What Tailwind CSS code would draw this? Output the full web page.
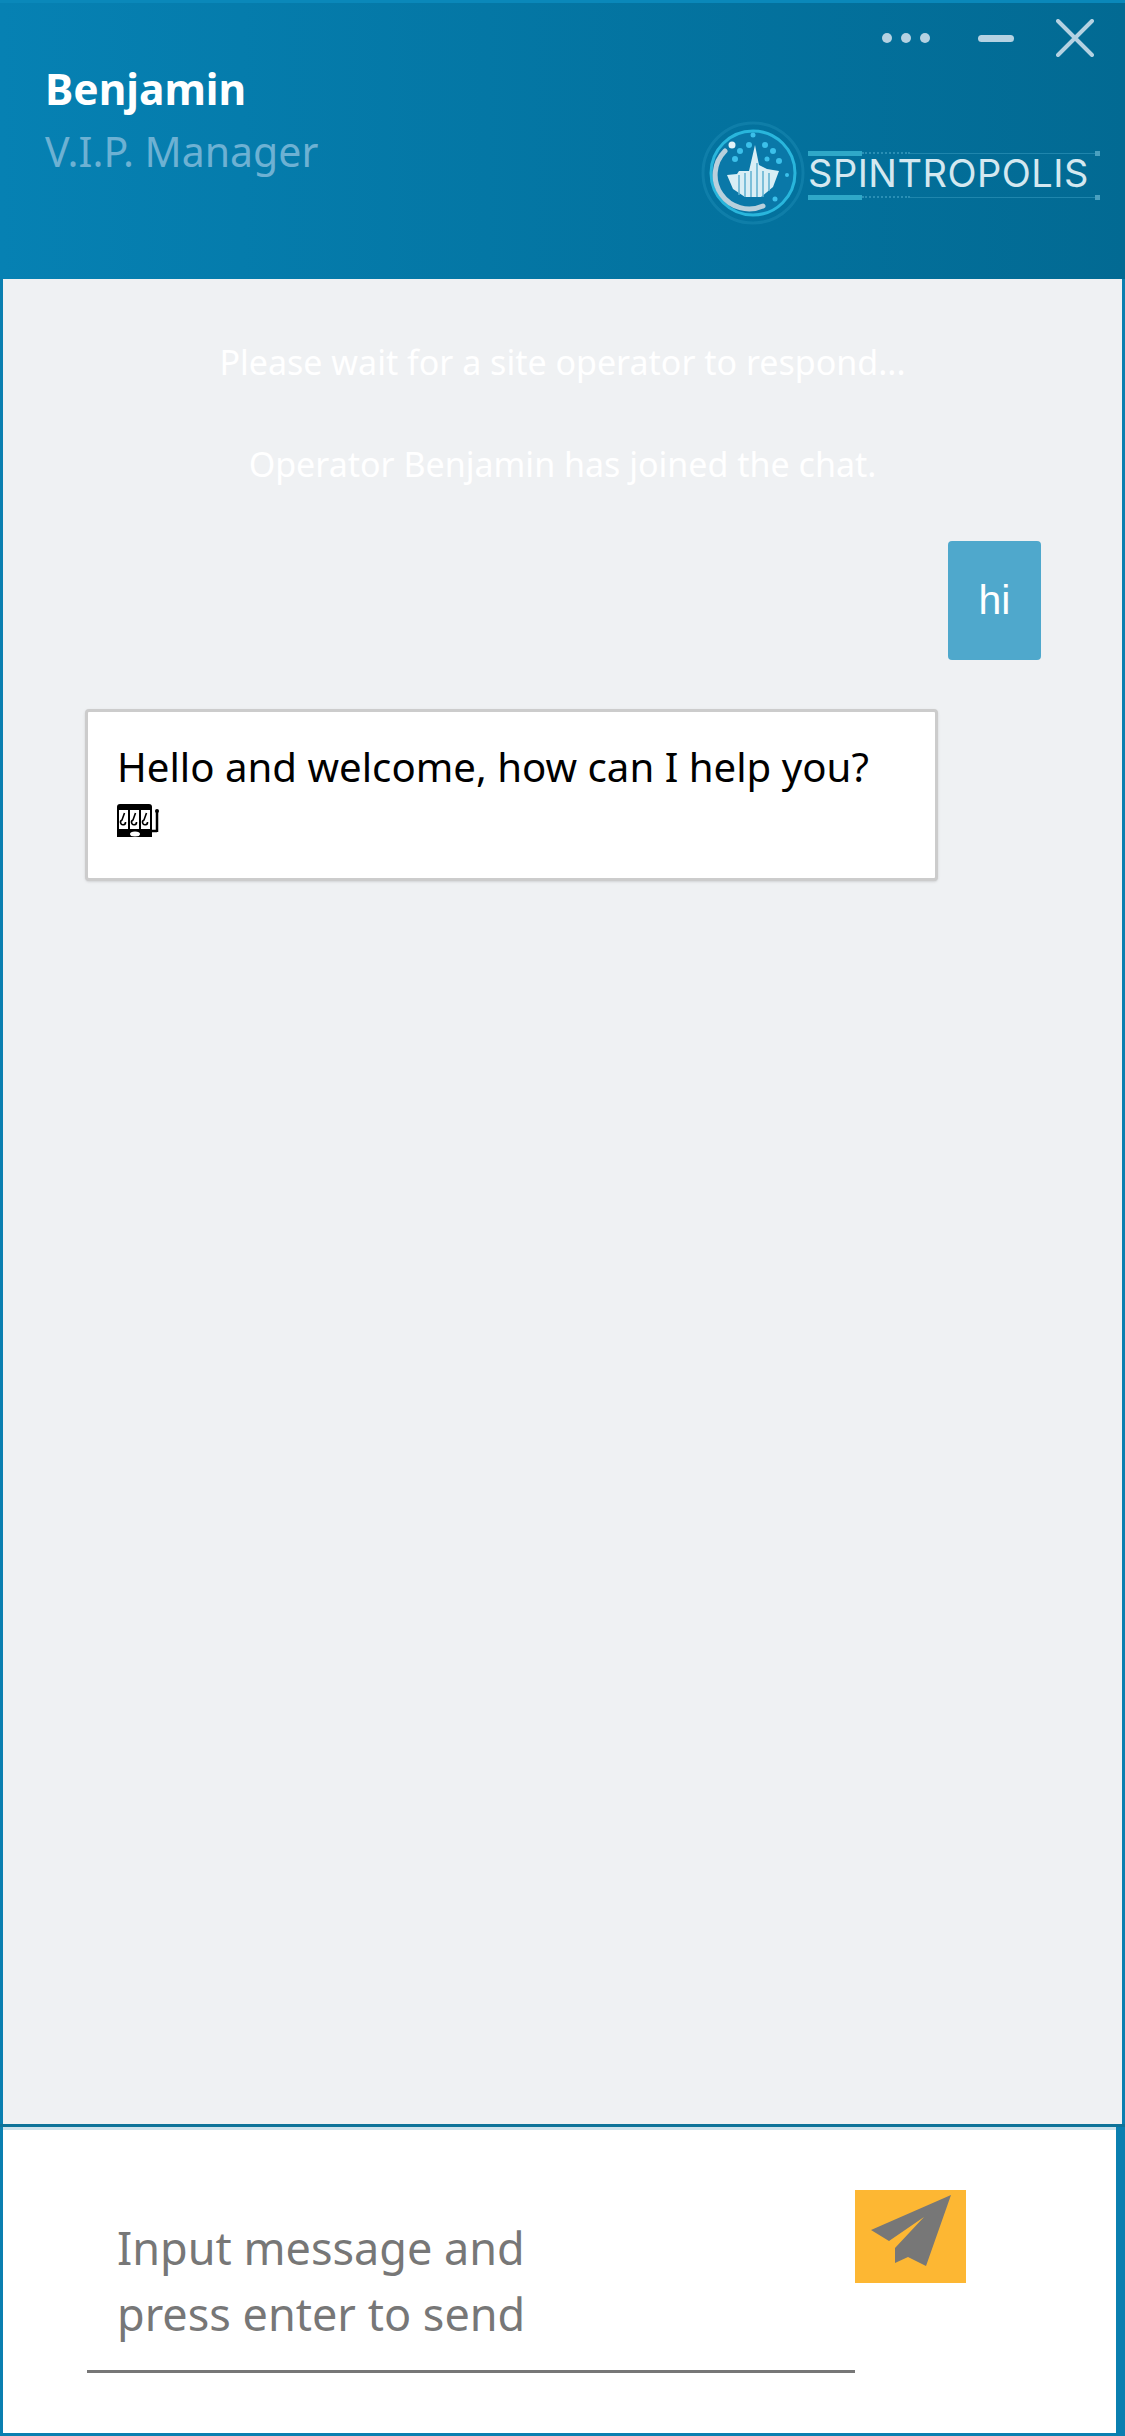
<!DOCTYPE html>
<html lang="en">
<head>
  <meta charset="UTF-8" />
  <title>Chat</title>
  <script src="https://cdn.jsdelivr.net/npm/@tailwindcss/browser@4"></script>
</head>
<body class="bg-white">
  <div class="w-[1125px] h-[2436px] flex flex-col font-['Noto_Sans','DejaVu_Sans',sans-serif] border-x-[3px] border-[#0a7fb0]">

    <!-- Header -->
    <header class="h-[279px] -mx-[3px] shrink-0 flex justify-between bg-gradient-to-r from-[#0681b3] to-[#026a93] border-t-[3px] border-[#0a88ba]">
      <div class="pl-[45px] pt-[60px]">
        <div class="text-[42.5px] leading-[52px] font-bold text-white">Benjamin</div>
        <div class="text-[41px] leading-[60px] mt-[6px] text-[#6db1d3]">V.I.P. Manager</div>
      </div>
      <div class="w-[440px] flex flex-col items-end pr-[31px]">
        <div class="flex items-center h-[66px] pt-[4px]">
          <div class="flex gap-[9px]">
            <span class="w-[10px] h-[10px] rounded-full bg-[#b5d2e2]"></span>
            <span class="w-[10px] h-[10px] rounded-full bg-[#b5d2e2]"></span>
            <span class="w-[10px] h-[10px] rounded-full bg-[#b5d2e2]"></span>
          </div>
          <span class="w-[36px] h-[7px] rounded-full bg-[#b5d2e2] ml-[48px]"></span>
          <svg class="ml-[42px]" width="38" height="38" viewBox="0 0 38 38"><path d="M2 2 L36 36 M36 2 L2 36" stroke="#b5d2e2" stroke-width="4" stroke-linecap="round"/></svg>
        </div>
        <div class="flex items-center mt-[52px] mr-[-6px]">
          <svg width="104" height="104" viewBox="0 0 104 104">
            <circle cx="52" cy="52" r="50" fill="none" stroke="#2a9cc4" stroke-width="3" opacity=".3"/>
            <circle cx="52" cy="52" r="42" fill="#0a78a8" stroke="#29b6dc" stroke-width="3"/>
            <path d="M24 30 A34 34 0 0 0 62 85" fill="none" stroke="#b9d0dc" stroke-width="5" stroke-linecap="round"/>
            <path d="M26 54 L36 53 L38 50 L48 50 L54 24 L58 44 L66 48 L78 50 L72 66 L60 76 L44 76 L32 68 Z" fill="#d9eef5"/>
            <path d="M38 54V74M44 52V76M50 50V76M56 42V76M62 50V76M68 52V70" stroke="#5fb0cf" stroke-width="1.5"/>
            <g fill="#3cc0ea">
              <circle cx="31" cy="24" r="3.5" fill="#e2f2f8"/>
              <circle cx="39" cy="30" r="3"/><circle cx="48" cy="24" r="3"/><circle cx="52" cy="14" r="2.5"/><circle cx="34" cy="38" r="3"/>
              <circle cx="64" cy="24" r="3"/><circle cx="72" cy="30" r="3"/><circle cx="78" cy="40" r="3"/><circle cx="66" cy="38" r="2.5"/>
              <circle cx="74" cy="78" r="2.5"/><circle cx="86" cy="54" r="2"/>
            </g>
          </svg>
          <div class="ml-[3px] mt-[4px] w-[292px] flex flex-col">
            <div class="flex items-center h-[5px]"><span class="w-[54px] h-[5px] bg-[#2fa8c8]"></span><span class="w-[48px] h-0 border-t-[2px] border-dotted border-[#2a8fb5]"></span><span class="flex-1 h-[1px] bg-[#1f86ad]"></span><span class="w-[5px] h-[5px] bg-[#4aa0c0]"></span></div>
            <div class="h-[39px] text-[38px] leading-[35px] text-[#d4e8f0] font-['Inter',sans-serif] tracking-[0.5px]">SPINTROPOLIS</div>
            <div class="flex items-center h-[5px]"><span class="w-[54px] h-[5px] bg-[#2fa8c8]"></span><span class="w-[48px] h-0 border-t-[2px] border-dotted border-[#2a8fb5]"></span><span class="flex-1 h-[1px] bg-[#1f86ad]"></span><span class="w-[5px] h-[5px] bg-[#4aa0c0]"></span></div>
          </div>
        </div>
      </div>
    </header>

    <!-- Messages -->
    <main class="flex-1 bg-[#eff1f3] flex flex-col">
      <div class="pt-[47px] text-center text-white text-[34px] leading-[60px]">
        <div class="mt-[6px]">Please wait for a site operator to respond...</div>
        <div class="mt-[42px]">Operator Benjamin has joined the chat.</div>
      </div>
      <div class="flex justify-end pr-[81px] mt-[47px]">
        <div class="w-[93px] h-[119px] rounded-[4px] bg-[#4fa8cc] text-white text-[41px] flex items-center justify-center font-['Liberation_Sans',sans-serif]">hi</div>
      </div>
      <div class="ml-[82px] mt-[49px] w-[853px] h-[172px] bg-white border-[3px] border-[#cccccc] rounded-[4px] shadow-sm pl-[29px] pt-[28px] text-black text-[40.2px] leading-[54px]">
        <div>Hello and welcome, how can I help you?</div>
        <svg class="mt-[10px]" width="42" height="34" viewBox="0 0 42 34">
          <path d="M0 3 a3 3 0 0 1 3-3 h29 a3 3 0 0 1 3 3 v30 h-35z" fill="#000"/>
          <rect x="2" y="6" width="9" height="19" fill="#fff"/><rect x="13" y="6" width="9" height="19" fill="#fff"/><rect x="24" y="6" width="9" height="19" fill="#fff"/>
          <path d="M7.5 9 L5 16 a2.5 2.5 0 1 0 3.5 2M18.5 9 L16 16 a2.5 2.5 0 1 0 3.5 2M29.5 9 L27 16 a2.5 2.5 0 1 0 3.5 2" stroke="#000" stroke-width="1.6" fill="none"/>
          <ellipse cx="18" cy="30" rx="5" ry="2.5" fill="#fff"/>
          <path d="M40 7V28M35 27h5" stroke="#000" stroke-width="2.5"/><circle cx="40" cy="7" r="2" fill="#000"/>
        </svg>
      </div>
    </main>

    <!-- Composer -->
    <footer class="h-[312px] shrink-0 -mx-[3px] bg-white border-t-[3px] border-[#0e7399] border-b-[3px] border-b-[#0a7fb0] flex">
      <div class="w-full h-full border-l-[3px] border-r-[9px] border-[#0a7fb0] flex flex-col">
        <div class="h-[3px] bg-[#cfe3ec]"></div>
        <div class="flex pl-[84px]">
          <div class="w-[768px] h-[243px] border-b-[3px] border-[#777777] pl-[30px] pt-[85px] text-[45px] leading-[66px] text-[#777777]">
            Input message and<br />press enter to send
          </div>
          <div class="w-[111px] h-[93px] mt-[60px] bg-[#fdb733]">
            <svg width="111" height="93" viewBox="0 0 111 93"><path d="M96 5 L16 40 L34 51 L69 27 L40 58 L40 73 L53 67 L71 76 Z" fill="#777777"/></svg>
          </div>
        </div>
      </div>
    </footer>
  </div>
</body>
</html>
